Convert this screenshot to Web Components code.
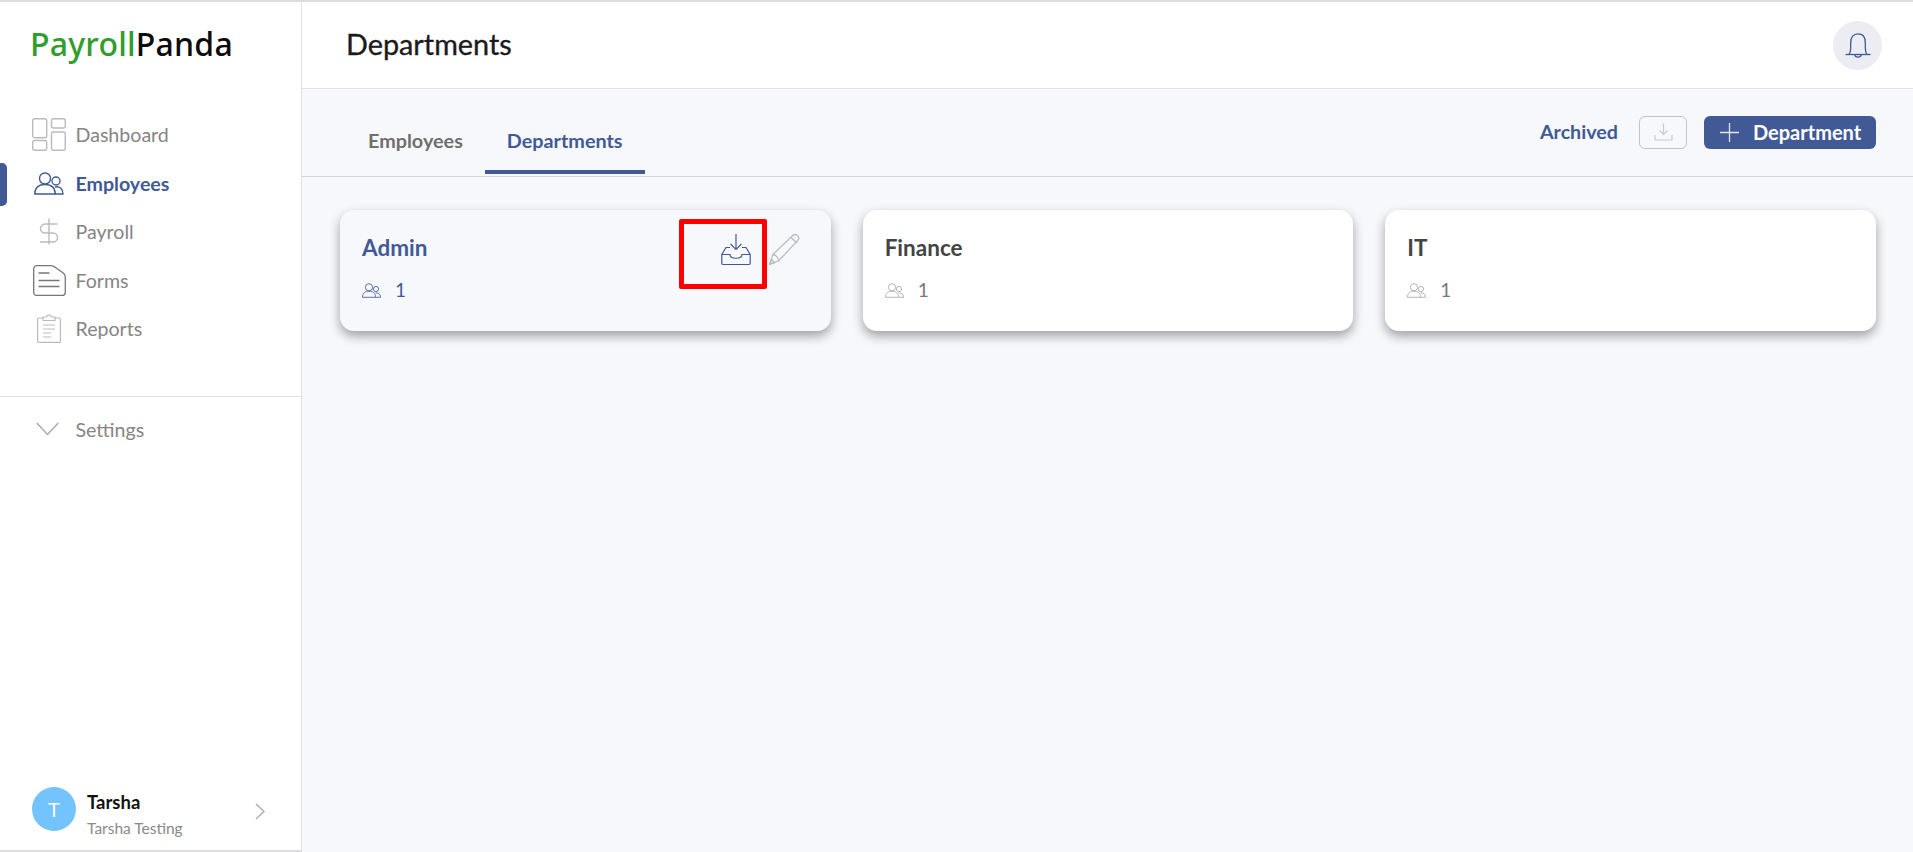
<!DOCTYPE html>
<html>
<head>
<meta charset="utf-8">
<title>Departments</title>
<style>
  html, body { margin: 0; height: 100%; }
  body { font-family: Lato, "Noto Sans", sans-serif; background: #f7f8fc; }
</style>
</head>
<body>
<app-shell>
  <side-bar slot="side"></side-bar>
  <top-bar slot="main" heading="Departments"></top-bar>
  <tab-row slot="main"></tab-row>
  <card-grid slot="main">
    <dept-card name="Admin" count="1" active></dept-card>
    <dept-card name="Finance" count="1"></dept-card>
    <dept-card name="IT" count="1"></dept-card>
  </card-grid>
</app-shell>

<script>
const ICONS = {
  dashboard: `<svg width="34" height="33" viewBox="0 0 34 33" fill="none" stroke="#bbb" stroke-width="1.4"><rect x=".7" y=".7" width="14" height="19" rx="2"/><rect x=".7" y="22.5" width="14" height="9.8" rx="2"/><rect x="19.5" y=".7" width="13.8" height="9.3" rx="2"/><rect x="19.5" y="14" width="13.8" height="18.3" rx="2"/></svg>`,
  people: `<svg width="30" height="23" viewBox="0 0 30 23" fill="none" stroke="currentColor" stroke-width="1.4"><circle cx="11" cy="6.5" r="5.5"/><path d="M.8 22c0-6.500 4-9.500 10.200-9.500S21.200 15.500 21.200 22z"/><circle cx="22" cy="9" r="4"/><path d="M21 15c5-1 8 2 8 7h-8"/></svg>`,
  dollar: `<svg width="20" height="27" viewBox="0 0 20 27" fill="none" stroke="#bbb" stroke-width="1.4"><path d="M10 .5v26M18.500 6H6a4.300 4.300 0 0 0 0 9h8a4.300 4.300 0 0 1 0 9H1"/></svg>`,
  form: `<svg width="33" height="31" viewBox="0 0 33 31" fill="none" stroke="#777" stroke-width="1.3"><path d="M4 .7h14c2 0 3 .6 4.500 1.700l8 5.800c1.200 1 1.800 2 1.800 3.800v15.500c0 1.800-1.300 3-3 3H4c-2 0-3.300-1.300-3.300-3V4C.7 2 2 .7 4 .7z"/><path d="M5.500 8h11M5.500 15.500h21M5.500 21.500h21" stroke-width="1.500"/></svg>`,
  report: `<svg width="24" height="29" viewBox="0 0 24 29" fill="none" stroke="#bbb" stroke-width="1.2"><rect x=".6" y="4" width="22.800" height="24.400" rx="1"/><path d="M6 3h3.500a2.600 2.600 0 0 1 5 0H18v3.500H6z" fill="#fff"/><path d="M6 11h12M6 15h12M6 19h8M6 23h8"/></svg>`,
  chevronDown: `<svg width="26" height="14" viewBox="0 0 26 14" fill="none" stroke="#aaa" stroke-width="1.500"><path d="M.8 1l10.700 11.500L22.200 1"/></svg>`,
  chevronRight: `<svg width="10" height="17" viewBox="0 0 10 17" fill="none" stroke="#aaa" stroke-width="1.300"><path d="M1 1l8 7.500L1 16"/></svg>`,
  bell: `<svg width="26" height="25" viewBox="0 0 26 25" fill="none" stroke="#415a96" stroke-width="1.300"><path d="M.5 21.500h25"/><path d="M4 21.500c1.500-2 1.700-3.500 1.700-6.500V9.500C5.700 4 8.500.8 13 .8s7.300 3.200 7.300 8.700V15c0 3 .2 4.500 1.700 6.500"/><path d="M9.800 21.800c.2 3 6.200 3 6.400 0"/></svg>`,
  tray: `<svg width="19" height="18" viewBox="0 0 19 18" fill="none" stroke="#ccc" stroke-width="1.200"><path d="M9.500 .5v11M5.500 7.500l4 4 4-4M1 12v5h17v-5"/></svg>`,
  plus: `<svg width="19" height="19" viewBox="0 0 19 19" fill="none" stroke="#fff" stroke-width="1.300" opacity=".85"><path d="M9.500 0v19M0 9.500h19"/></svg>`,
  inbox: `<svg width="30" height="31" viewBox="0 0 30 31" fill="none" stroke="#415a96" stroke-width="1.200"><path d="M15 0v15.500M9.500 10l5.500 5.500 5.500-5.500"/><path d="M9 13.500H5L.8 20.500V29c0 1 .7 1.500 1.500 1.500h25.400c.8 0 1.500-.5 1.500-1.500V20.500L25 13.500H21"/><path d="M.8 20.500H9c0 5 12 5 12 0h8.200"/></svg>`,
  pencil: `<svg width="31" height="31" viewBox="0 0 31 31" fill="none" stroke="#bbb" stroke-width="1.300"><path d="M.8 30.200l3-9.700L24 1.300c1.500-1.200 3.300-.8 4.500.5 1.300 1.300 1.700 3 .5 4.300L9.800 26.800z"/><path d="M3.800 20.500c2.500 0 5.500 3 6 6.300M22 3.500l6 5.500M.8 30.200l1.500-5 3.300 3.500z"/></svg>`,
  group: `<svg width="19" height="15" viewBox="0 0 19 15" fill="none" stroke="currentColor" stroke-width="1"><circle cx="7" cy="4.300" r="3.600"/><path d="M.5 14.300c0-4.300 2.500-6 6.500-6s6.500 1.700 6.500 6z"/><circle cx="14" cy="6" r="2.600"/><path d="M13.500 10c3-.5 5 1 5 4.300h-5"/></svg>`
};

class SvgIcon extends HTMLElement {
  constructor() {
    super();
    this.attachShadow({ mode: "open" });
  }
  connectedCallback() {
    this.shadowRoot.innerHTML = `<style>:host{display:inline-flex;align-items:center;justify-content:center;line-height:0}</style>${ICONS[this.getAttribute("name")]}`;
  }
}
customElements.define("svg-icon", SvgIcon);

class AppShell extends HTMLElement {
  constructor() {
    super();
    this.attachShadow({ mode: "open" });
    this.shadowRoot.innerHTML = `
      <style>
        :host { display: flex; box-sizing: border-box; height: 852px; border-top: 2px solid #ddd; overflow: hidden; }
        .side { flex: 0 0 302px; display: flex; }
        .main { flex: 1; min-width: 0; display: flex; flex-direction: column; }
      </style>
      <div class="side"><slot name="side"></slot></div>
      <div class="main"><slot name="main"></slot></div>`;
  }
}
customElements.define("app-shell", AppShell);

class NavItem extends HTMLElement {
  constructor() {
    super();
    this.attachShadow({ mode: "open" });
  }
  connectedCallback() {
    this.shadowRoot.innerHTML = `
      <style>
        :host { display: flex; align-items: center; position: relative; height: 48.5px; padding-left: 32px; font-size: 19.6px; color: #858585; }
        :host([active]) { color: #415a96; font-weight: 700; }
        :host([active])::before { content: ""; position: absolute; left: 0; top: 4px; width: 7px; height: 43px; background: #415a96; border-radius: 0 5px 5px 0; }
        .ic { width: 34px; display: flex; justify-content: center; margin-right: 9.5px; color: #415a96; }
      </style>
      <span class="ic"><svg-icon name="${this.getAttribute("icon")}"></svg-icon></span>
      <slot></slot>`;
  }
}
customElements.define("nav-item", NavItem);

class SideBar extends HTMLElement {
  constructor() {
    super();
    this.attachShadow({ mode: "open" });
    this.shadowRoot.innerHTML = `
      <style>
        :host { display: flex; flex-direction: column; box-sizing: border-box; width: 302px; height: 100%; background: #fff; border-right: 1px solid #e2e2e2; border-bottom: 2px solid #ddd; }
        .logo { font-family: "Noto Sans", sans-serif; font-size: 32px; font-weight: 500; line-height: 40px; padding: 22px 0 0 30px; height: 86px; box-sizing: border-box; margin-bottom: 22.5px; color: #0b0b0b; letter-spacing: .2px; }
        .logo b { font-weight: 500; color: #2f9e2c; }
        .nav { height: 286.5px; box-sizing: border-box; border-bottom: 1px solid #e0e0e0; }
        .foot { margin-top: auto; display: flex; align-items: center; padding: 0 36px 12.5px 32px; }
        .avatar { width: 44px; height: 44px; border-radius: 50%; background: #72c3fe; color: #fff; font-size: 20px; display: flex; align-items: center; justify-content: center; margin-right: 11px; }
        .who { flex: 1; padding-top: 11px; }
        .name { font-size: 18.5px; font-weight: 700; color: #111; line-height: 22px; }
        .sub { font-size: 15.5px; color: #8a8a8a; line-height: 20px; margin-top: 5px; }
        .foot svg-icon { margin-top: 6px; }
        nav-item.settings { margin-top: 8px; }
      </style>
      <div class="logo"><b>Payroll</b>Panda</div>
      <div class="nav">
        <nav-item icon="dashboard">Dashboard</nav-item>
        <nav-item icon="people" active>Employees</nav-item>
        <nav-item icon="dollar">Payroll</nav-item>
        <nav-item icon="form">Forms</nav-item>
        <nav-item icon="report">Reports</nav-item>
      </div>
      <nav-item class="settings" icon="chevronDown">Settings</nav-item>
      <div class="foot">
        <div class="avatar">T</div>
        <div class="who"><div class="name">Tarsha</div><div class="sub">Tarsha Testing</div></div>
        <svg-icon name="chevronRight"></svg-icon>
      </div>`;
  }
}
customElements.define("side-bar", SideBar);

class TopBar extends HTMLElement {
  constructor() {
    super();
    this.attachShadow({ mode: "open" });
  }
  connectedCallback() {
    this.shadowRoot.innerHTML = `
      <style>
        :host { display: flex; align-items: center; justify-content: space-between; box-sizing: border-box; height: 87px; padding: 0 31px 0 44px; background: #fff; border-bottom: 1px solid #e2e2e2; }
        h1 { margin: 0 0 3px; font-size: 28.8px; font-weight: 400; color: #1b1b1b; -webkit-text-stroke: .35px #1b1b1b; }
        .bell { width: 49px; height: 49px; border-radius: 50%; background: #ecedf3; display: flex; align-items: center; justify-content: center; }
      </style>
      <h1>${this.getAttribute("heading")}</h1>
      <div class="bell"><svg-icon name="bell"></svg-icon></div>`;
  }
}
customElements.define("top-bar", TopBar);

class TabRow extends HTMLElement {
  constructor() {
    super();
    this.attachShadow({ mode: "open" });
    this.shadowRoot.innerHTML = `
      <style>
        :host { display: flex; align-items: stretch; box-sizing: border-box; height: 88px; padding: 0 37px 0 44px; border-bottom: 1px solid #d2d3d6; }
        .tabs { display: flex; align-items: flex-end; padding-bottom: 2px; }
        .tab { display: flex; align-items: center; justify-content: center; box-sizing: border-box; height: 64px; padding: 0 22px; font-size: 19.8px; font-weight: 700; color: #6f6f6f; border-bottom: 4px solid transparent; }
        .tab.on { color: #415a96; border-bottom-color: #415a96; }
        .tools { margin-left: auto; display: flex; align-items: center; height: 86px; }
        .arch { font-size: 19.7px; font-weight: 700; color: #415a96; margin: 0 21px 2px 0; }
        .ghost { box-sizing: border-box; width: 48px; height: 33px; border: 1px solid #c4c4c4; border-radius: 6px; display: flex; align-items: center; justify-content: center; margin-right: 17px; }
        .add { box-sizing: border-box; width: 172px; height: 33px; border-radius: 6px; background: #415a96; color: #fff; font-size: 20px; font-weight: 700; display: flex; align-items: center; padding-left: 16px; gap: 14px; }
      </style>
      <div class="tabs">
        <div class="tab">Employees</div>
        <div class="tab on">Departments</div>
      </div>
      <div class="tools">
        <span class="arch">Archived</span>
        <div class="ghost"><svg-icon name="tray"></svg-icon></div>
        <div class="add"><svg-icon name="plus"></svg-icon>Department</div>
      </div>`;
  }
}
customElements.define("tab-row", TabRow);

class CardGrid extends HTMLElement {
  constructor() {
    super();
    this.attachShadow({ mode: "open" });
    this.shadowRoot.innerHTML = `
      <style>
        :host { display: grid; grid-template-columns: repeat(3, 1fr); gap: 32px; padding: 33px 37px 0 38px; }
      </style>
      <slot></slot>`;
  }
}
customElements.define("card-grid", CardGrid);

class DeptCard extends HTMLElement {
  constructor() {
    super();
    this.attachShadow({ mode: "open" });
  }
  connectedCallback() {
    const active = this.hasAttribute("active");
    this.shadowRoot.innerHTML = `
      <style>
        :host { display: flex; flex-direction: column; position: relative; box-sizing: border-box; height: 121px; padding: 24px 22px 0; background: #fff; border-radius: 14px; box-shadow: 0 5px 11px rgba(0,0,0,.36); color: #444; }
        :host([active]) { background: #f7f8fc; color: #415a96; }
        .name { font-size: 22.5px; font-weight: 700; line-height: 28px; }
        .meta { display: flex; align-items: center; margin-top: 15px; font-size: 19px; line-height: 26px; color: #777; }
        :host([active]) .meta { color: #415a96; }
        .grp { color: #b5b5b5; margin-right: 14px; }
        :host([active]) .grp { color: #415a96; opacity: .85; }
        .actions { position: absolute; top: 24px; right: 31px; display: flex; gap: 18px; }
        .mark { position: absolute; left: 339px; top: 9px; box-sizing: border-box; width: 88px; height: 70px; border: 5px solid #f00; border-radius: 2px; }
      </style>
      <div class="name">${this.getAttribute("name")}</div>
      <div class="meta"><svg-icon class="grp" name="group"></svg-icon>${this.getAttribute("count")}</div>
      ${active ? `<div class="actions"><svg-icon name="inbox"></svg-icon><svg-icon name="pencil"></svg-icon></div><div class="mark"></div>` : ""}`;
  }
}
customElements.define("dept-card", DeptCard);
</script>
</body>
</html>
